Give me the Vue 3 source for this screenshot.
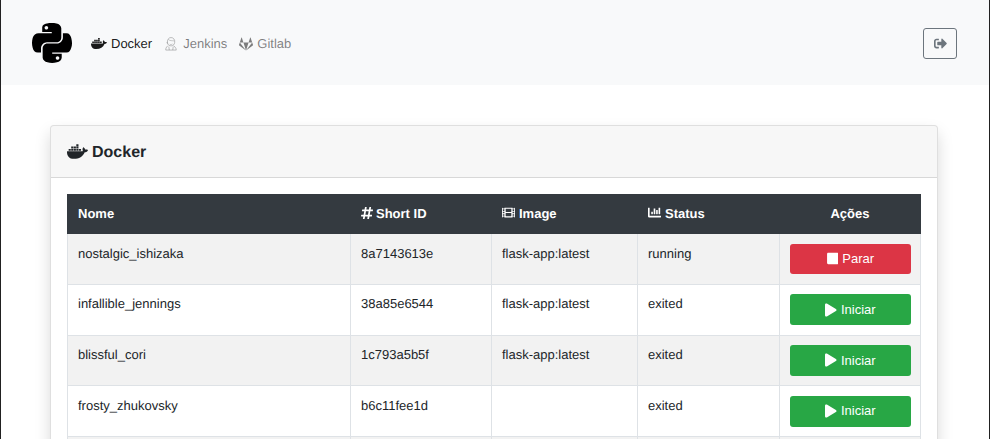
<script setup>
const icons = {
  docker: { vb: '0 0 640 512', d: 'M349.9 236.3h-66.1v-59.4h66.1v59.4zm0-204.3h-66.1v60.7h66.1V32zm78.2 144.8H362v59.4h66.1v-59.4zm-156.3-72.1h-66.1v60.1h66.1v-60.1zm78.1 0h-66.1v60.1h66.1v-60.1zm276.8 100c-14.4-9.7-47.6-13.2-73.1-8.4-3.3-24-16.7-44.9-41.1-63.7l-14-9.3-9.3 14c-18.4 27.8-23.4 73.6-3.7 103.8-8.7 4.7-25.8 11.1-48.4 10.7H2.4c-8.7 50.8 5.8 116.8 44 162.1 37.1 43.9 92.7 66.2 165.4 66.2 157.4 0 273.9-72.5 328.4-204.2 21.4.4 67.6.1 91.3-45.2 1.5-2.5 6.6-13.2 8.5-17.1l-13.3-8.9zm-511.1-27.9h-66v59.4h66.1v-59.4zm78.1 0h-66.1v59.4h66.1v-59.4zm78.1 0h-66.1v59.4h66.1v-59.4zm-78.1-72.1h-66.1v60.1h66.1v-60.1z' },
  gitlab: { vb: '0 0 512 512', d: 'M105.2 24.9c-3.1-8.9-15.7-8.9-18.9 0L29.8 199.7h132c-.1 0-56.6-174.8-56.6-174.8zM.9 287.7c-2.6 8 .3 16.9 7.1 22l247.9 184-226.2-294zm160.8-88l94.3 294 94.3-294zm349.4 88l-28.8-88-226.3 294 247.9-184c6.9-5.1 9.7-14 7.2-22zM425.7 24.9c-3.1-8.9-15.7-8.9-18.9 0l-56.6 174.8h132z' },
  python: { vb: '0 0 448 512', d: 'M439.8 200.5c-7.7-30.9-22.3-54.2-53.4-54.2h-40.1v47.4c0 36.8-31.2 67.8-66.8 67.8H172.7c-29.2 0-53.4 25-53.4 54.3v101.8c0 29 25.2 46 53.4 54.3 33.8 9.9 66.3 11.7 106.8 0 26.9-7.8 53.4-23.5 53.4-54.3v-40.7H226.2v-13.6h160.2c31.1 0 42.6-21.7 53.4-54.2 11.2-33.5 10.7-65.7 0-108.6zM286.2 404c11.1 0 20.1 9.1 20.1 20.3 0 11.3-9 20.4-20.1 20.4-11 0-20.1-9.2-20.1-20.4.1-11.3 9.1-20.3 20.1-20.3zM167.8 248.1h106.8c29.7 0 53.4-24.5 53.4-54.3V91.9c0-29-24.4-50.7-53.4-55.6-35.8-5.9-74.7-5.6-106.8.1-45.2 8-53.4 24.7-53.4 55.6v40.7h106.9v13.6h-147c-31.1 0-58.3 18.7-66.8 54.2-9.8 40.7-10.2 66.1 0 108.6 7.6 31.6 25.7 54.2 56.8 54.2H101v-48.8c0-35.3 30.5-66.4 66.8-66.4zm-6.7-142.6c-11.1 0-20.1-9.1-20.1-20.3.1-11.3 9-20.4 20.1-20.4 11 0 20.1 9.2 20.1 20.4s-9 20.3-20.1 20.3z' },
  signout: { vb: '0 0 512 512', d: 'M497 273L329 441c-15 15-41 4.5-41-17v-96H152c-13.3 0-24-10.7-24-24v-96c0-13.3 10.7-24 24-24h136V88c0-21.4 25.9-32 41-17l168 168c9.3 9.4 9.3 24.6 0 34zM192 436v-40c0-6.6-5.4-12-12-12H96c-17.7 0-32-14.3-32-32V160c0-17.7 14.3-32 32-32h84c6.6 0 12-5.4 12-12V76c0-6.6-5.4-12-12-12H96c-53 0-96 43-96 96v192c0 53 43 96 96 96h84c6.6 0 12-5.4 12-12z' },
  hash: { vb: '0 0 448 512', d: 'M440.667 182.109l7.143-40c1.313-7.355-4.342-14.109-11.813-14.109h-74.81l14.623-81.891C377.123 38.754 371.468 32 363.997 32h-40.632a12 12 0 0 0-11.813 9.891L296.175 128H197.54l14.623-81.891C213.477 38.754 207.822 32 200.35 32h-40.632a12 12 0 0 0-11.813 9.891L132.528 128H53.432a12 12 0 0 0-11.813 9.891l-7.143 40C33.163 185.246 38.818 192 46.289 192h74.81L98.242 320H19.146a12 12 0 0 0-11.813 9.891l-7.143 40C-1.123 377.246 4.532 384 12.003 384h74.81L72.19 465.891C70.877 473.246 76.532 480 84.003 480h40.632a12 12 0 0 0 11.813-9.891L151.825 384h98.634l-14.623 81.891C234.523 473.246 240.178 480 247.65 480h40.632a12 12 0 0 0 11.813-9.891L315.472 384h79.096a12 12 0 0 0 11.813-9.891l7.143-40c1.313-7.355-4.342-14.109-11.813-14.109h-74.81l22.857-128h79.096a12 12 0 0 0 11.813-9.891zM261.889 320h-98.634l22.857-128h98.634l-22.857 128z' },
  film: { vb: '0 0 512 512', d: 'M488 64h-8v20c0 6.6-5.4 12-12 12h-40c-6.6 0-12-5.4-12-12V64H96v20c0 6.6-5.4 12-12 12H44c-6.6 0-12-5.4-12-12V64h-8C10.7 64 0 74.7 0 88v336c0 13.3 10.7 24 24 24h8v-20c0-6.6 5.4-12 12-12h40c6.6 0 12 5.4 12 12v20h320v-20c0-6.6 5.4-12 12-12h40c6.6 0 12 5.4 12 12v20h8c13.3 0 24-10.7 24-24V88c0-13.3-10.7-24-24-24zM96 372c0 6.6-5.4 12-12 12H44c-6.6 0-12-5.4-12-12v-40c0-6.6 5.4-12 12-12h40c6.6 0 12 5.4 12 12v40zm0-96c0 6.6-5.4 12-12 12H44c-6.6 0-12-5.4-12-12v-40c0-6.6 5.4-12 12-12h40c6.6 0 12 5.4 12 12v40zm0-96c0 6.6-5.4 12-12 12H44c-6.6 0-12-5.4-12-12v-40c0-6.6 5.4-12 12-12h40c6.6 0 12 5.4 12 12v40zm272 208c0 6.6-5.4 12-12 12H156c-6.6 0-12-5.4-12-12v-96c0-6.6 5.4-12 12-12h200c6.6 0 12 5.4 12 12v96zm0-168c0 6.6-5.4 12-12 12H156c-6.6 0-12-5.4-12-12v-96c0-6.6 5.4-12 12-12h200c6.6 0 12 5.4 12 12v96zm112 152c0 6.6-5.4 12-12 12h-40c-6.6 0-12-5.4-12-12v-40c0-6.6 5.4-12 12-12h40c6.6 0 12 5.4 12 12v40zm0-96c0 6.6-5.4 12-12 12h-40c-6.6 0-12-5.4-12-12v-40c0-6.6 5.4-12 12-12h40c6.6 0 12 5.4 12 12v40zm0-96c0 6.6-5.4 12-12 12h-40c-6.6 0-12-5.4-12-12v-40c0-6.6 5.4-12 12-12h40c6.6 0 12 5.4 12 12v40z' },
  chart: { vb: '0 0 512 512', d: 'M332.8 320h38.4c6.4 0 12.8-6.4 12.8-12.8V172.8c0-6.4-6.4-12.8-12.8-12.8h-38.4c-6.4 0-12.8 6.4-12.8 12.8v134.4c0 6.4 6.4 12.8 12.8 12.8zm96 0h38.4c6.4 0 12.8-6.4 12.8-12.8V76.8c0-6.4-6.4-12.8-12.8-12.8h-38.4c-6.4 0-12.8 6.4-12.8 12.8v230.4c0 6.4 6.4 12.8 12.8 12.8zm-288 0h38.4c6.4 0 12.8-6.4 12.8-12.8v-70.4c0-6.4-6.4-12.8-12.8-12.8h-38.4c-6.4 0-12.8 6.4-12.8 12.8v70.4c0 6.4 6.4 12.8 12.8 12.8zm96 0h38.4c6.4 0 12.8-6.4 12.8-12.8V108.8c0-6.4-6.4-12.8-12.8-12.8h-38.4c-6.4 0-12.8 6.4-12.8 12.8v198.4c0 6.4 6.4 12.8 12.8 12.8zM496 384H64V80c0-8.84-7.16-16-16-16H16C7.16 64 0 71.16 0 80v336c0 17.67 14.33 32 32 32h464c8.84 0 16-7.16 16-16v-32c0-8.84-7.16-16-16-16z' },
  stop: { vb: '0 0 448 512', d: 'M400 32H48C21.5 32 0 53.5 0 80v352c0 26.5 21.5 48 48 48h352c26.5 0 48-21.5 48-48V80c0-26.5-21.5-48-48-48z' },
  play: { vb: '0 0 448 512', d: 'M424.4 214.7L72.4 6.6C43.8-10.3 0 6.1 0 47.9V464c0 37.5 40.7 60.1 72.4 41.3l352-208c31.4-18.5 31.5-64.1 0-82.6z' },
}
const rows = [
  { name: 'nostalgic_ishizaka', id: '8a7143613e', image: 'flask-app:latest', status: 'running' },
  { name: 'infallible_jennings', id: '38a85e6544', image: 'flask-app:latest', status: 'exited' },
  { name: 'blissful_cori', id: '1c793a5b5f', image: 'flask-app:latest', status: 'exited' },
  { name: 'frosty_zhukovsky', id: 'b6c11fee1d', image: '', status: 'exited' },
]
</script>

<template>
  <div class="page">
    <nav class="navbar">
      <svg class="logo" :viewBox="icons.python.vb"><path :d="icons.python.d" /></svg>
      <a class="nav-link active">
        <svg class="nav-ico docker-ico" :viewBox="icons.docker.vb"><path :d="icons.docker.d" /></svg>Docker
      </a>
      <a class="nav-link">
        <svg class="nav-ico jenkins-ico" viewBox="0 0 16 16" fill="none" stroke="currentColor">
          <path d="M4 7.5C3.3 4 5.2 1.2 8 1.2c2.8 0 4.7 2.4 4.2 5.6-.3 2.3-1.8 3.9-4 3.9C6 10.7 4.5 9.5 4 7.5z" stroke-width="1" />
          <path d="M5 3.5c2 1.6 4 1.2 6.8 1.5M4 8c-1 0-1-2 0-1.5M6.5 8.8c1 .6 2.5.5 3.2-.3" stroke-width=".8" />
          <path d="M4.5 10.5 3 12c-.8.8-1 2.2-1 3.5h12c0-1.5-.6-2.7-1.5-3.5l-1.500-1.500M5.500 11.500l.5 4M10.500 11.500l-.5 4" stroke-width="1" />
        </svg>Jenkins
      </a>
      <a class="nav-link">
        <svg class="nav-ico gitlab-ico" :viewBox="icons.gitlab.vb"><path :d="icons.gitlab.d" /></svg>Gitlab
      </a>
      <button class="logout" type="button" aria-label="Sair">
        <svg class="logout-ico" :viewBox="icons.signout.vb"><path :d="icons.signout.d" /></svg>
      </button>
    </nav>

    <main class="content">
      <section class="card">
        <header class="card-header">
          <svg class="title-ico" :viewBox="icons.docker.vb"><path :d="icons.docker.d" /></svg>
          <h1>Docker</h1>
        </header>
        <div class="card-body">
          <table>
            <colgroup>
              <col class="c1" /><col class="c2" /><col class="c3" /><col class="c4" /><col class="c5" />
            </colgroup>
            <thead>
              <tr>
                <th>Nome</th>
                <th><svg class="th-ico hash" :viewBox="icons.hash.vb"><path :d="icons.hash.d" /></svg>Short ID</th>
                <th><svg class="th-ico" :viewBox="icons.film.vb"><path :d="icons.film.d" /></svg>Image</th>
                <th><svg class="th-ico" :viewBox="icons.chart.vb"><path :d="icons.chart.d" /></svg>Status</th>
                <th class="center">Ações</th>
              </tr>
            </thead>
            <tbody>
              <tr v-for="r in rows" :key="r.id">
                <td>{{ r.name }}</td>
                <td>{{ r.id }}</td>
                <td>{{ r.image }}</td>
                <td>{{ r.status }}</td>
                <td>
                  <button v-if="r.status === 'running'" class="btn danger" type="button">
                    <svg class="btn-ico" :viewBox="icons.stop.vb"><path :d="icons.stop.d" /></svg>Parar
                  </button>
                  <button v-else class="btn success" type="button">
                    <svg class="btn-ico play" :viewBox="icons.play.vb"><path :d="icons.play.d" /></svg>Iniciar
                  </button>
                </td>
              </tr>
              <tr class="next-row">
                <td></td><td></td><td></td><td></td><td></td>
              </tr>
            </tbody>
          </table>
        </div>
      </section>
    </main>
  </div>
</template>

<style>
html, body { margin: 0; height: 439px; overflow: hidden; background: #fff; }
</style>

<style scoped>
.page {
  box-sizing: border-box;
  width: 990px;
  height: 439px;
  overflow: hidden;
  border-left: 1px solid #212121;
  border-right: 1px solid #212121;
  font-family: "Liberation Sans", Arial, sans-serif;
  font-size: 13px;
  line-height: 19.5px;
  text-rendering: geometricPrecision;
  color: #212529;
  background: #fff;
}
svg { fill: currentColor; display: block; flex: none; }
.navbar {
  display: flex;
  align-items: center;
  height: 85px;
  padding: 0 32px 0 31px;
  background: #f8f9fa;
}
.logo { width: 40px; height: 46px; margin-right: 19px; color: #000; }
.nav-link {
  display: flex;
  align-items: center;
  gap: 4px;
  margin-right: 12px;
  padding-top: 2px;
  color: rgba(0, 0, 0, .5);
}
.nav-link.active { color: rgba(0, 0, 0, .9); }
.docker-ico { width: 16px; height: 13px; }
.jenkins-ico { width: 14px; height: 15px; stroke: currentColor; fill: none; opacity: .55; margin-right: 1px; }
.gitlab-ico { width: 14px; height: 14px; }
.logout {
  display: flex;
  align-items: center;
  justify-content: center;
  width: 34px;
  height: 31px;
  margin-left: auto;
  margin-top: 2px;
  padding: 0;
  border: 1px solid #6c757d;
  border-radius: 3px;
  background: transparent;
  color: #6c757d;
}
.logout-ico { width: 13px; height: 13px; }
.content { padding: 40px 51px 0 49px; }
.card {
  border: 1px solid rgba(0, 0, 0, .125);
  border-radius: 4px;
  box-shadow: 0 8px 16px rgba(0, 0, 0, .15);
  background: #fff;
}
.card-header {
  display: flex;
  align-items: center;
  gap: 4px;
  box-sizing: border-box;
  height: 52px;
  padding: 0 16px;
  border-bottom: 1px solid rgba(0, 0, 0, .125);
  border-radius: 3px 3px 0 0;
  background: rgba(0, 0, 0, .03);
}
.title-ico { width: 21px; height: 17px; }
h1 { margin: 0; padding-top: 2px; font-size: 16px; line-height: 24px; font-weight: 700; color: #212529; }
.card-body { padding: 16px; }
table {
  width: 854px;
  table-layout: fixed;
  border-collapse: collapse;
}
.c1 { width: 283px; }
.c2 { width: 141px; }
.c3 { width: 146px; }
.c4 { width: 142px; }
th {
  height: 39px;
  padding: 0 10px;
  box-sizing: border-box;
  background: #343a40;
  color: #fff;
  font-weight: 700;
  text-align: left;
  border: 1px solid #343a40;
}
th svg { display: inline-block; vertical-align: -1px; margin-right: 4px; }
.th-ico { width: 13px; height: 13px; }
.th-ico.hash { width: 12px; height: 14px; vertical-align: -2px; margin-right: 3px; }
.center { text-align: center; }
td {
  padding: 9.5px 10px;
  vertical-align: top;
  border: 1px solid #dee2e6;
}
tbody tr:nth-child(odd) td { background: #f2f2f2; }
.btn {
  display: flex;
  align-items: center;
  justify-content: center;
  box-sizing: border-box;
  width: calc(100% + 1px);
  height: 30.75px;
  padding: 0;
  border: 0;
  border-radius: 3px;
  color: #fff;
  font: inherit;
}
.danger { background: #dc3545; }
.success { background: #28a745; }
.btn-ico { width: 11.5px; height: 13px; margin-right: 4px; }
.btn-ico.play { width: 11.5px; height: 14px; margin-right: 4px; }
</style>
